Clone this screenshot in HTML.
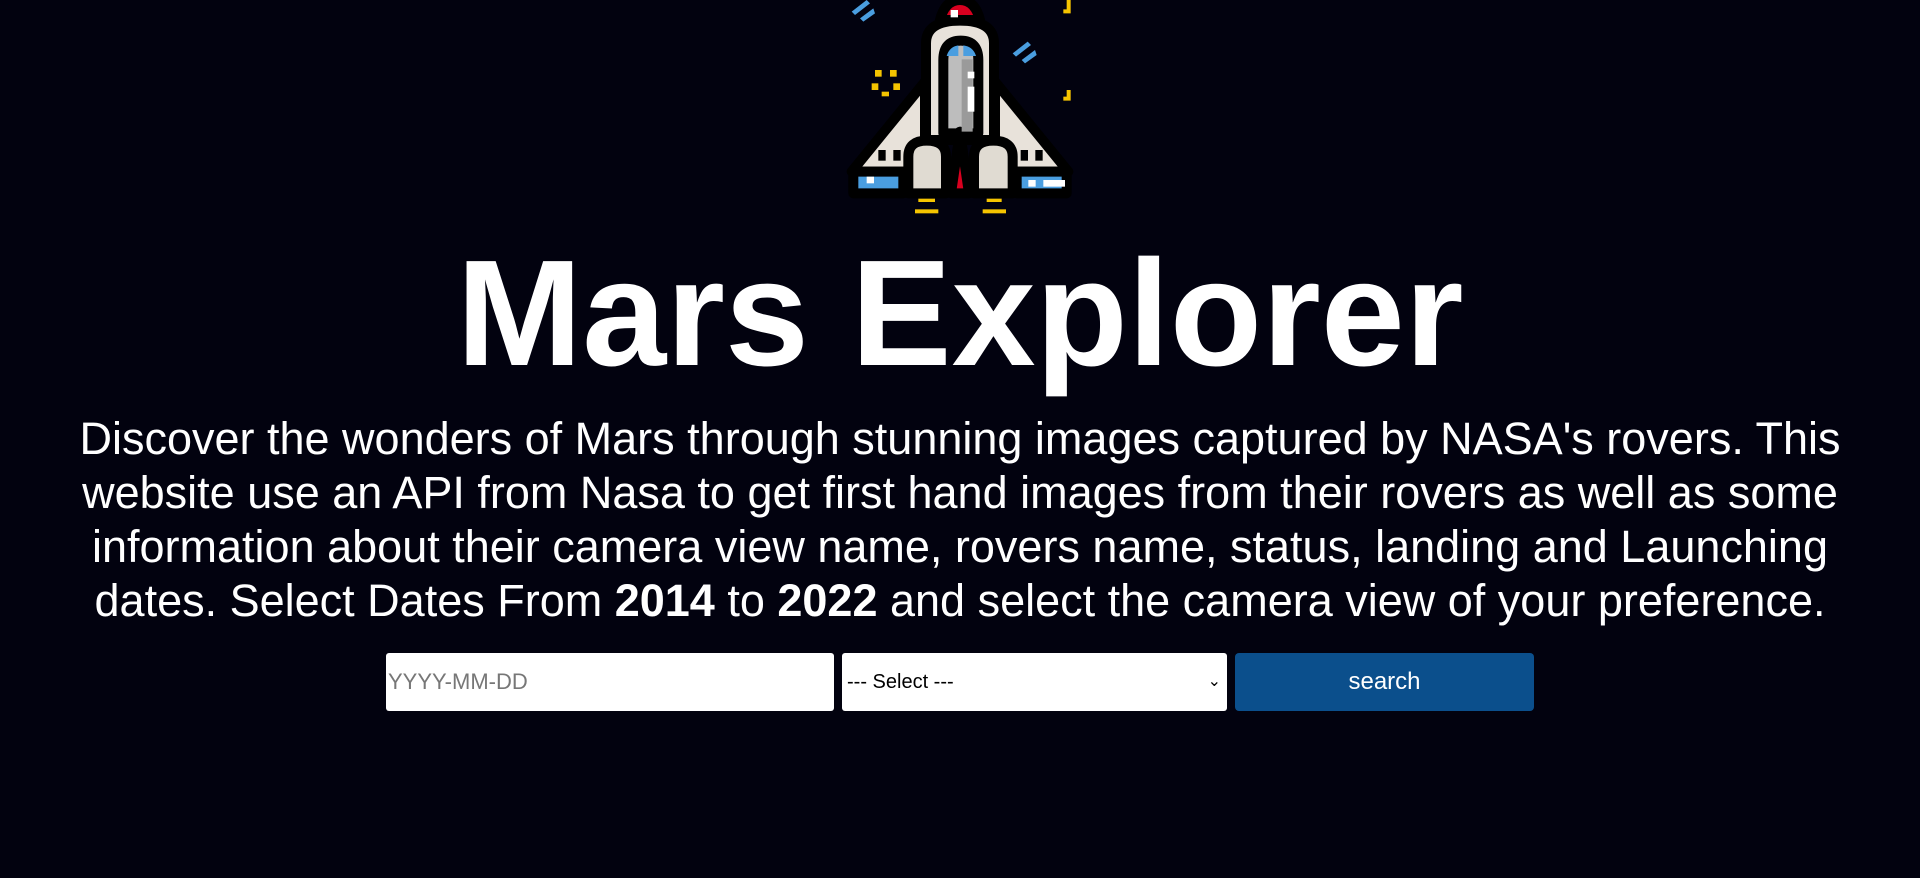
<!DOCTYPE html>
<html><head><meta charset="utf-8"><style>
html,body{margin:0;padding:0;background:#02020f;width:1920px;height:878px;overflow:hidden;font-family:"Liberation Sans",Arial,sans-serif;color:#fff}
svg.r{position:absolute;left:830px;top:0}
h1{position:absolute;left:0;width:1920px;top:233px;margin:0;text-align:center;font-size:151px;font-weight:bold;line-height:160px}
p{position:absolute;left:62px;width:1796px;top:412px;margin:0;text-align:center;font-size:45px;line-height:54px}
.in{position:absolute;top:653px;height:58px;box-sizing:border-box;background:#fff;border-radius:3px}
</style></head><body>
<svg class="r" width="260" height="230" viewBox="0 0 780 690">
<g stroke="#000" stroke-width="30" stroke-linejoin="round">
<polygon points="285,245 65,515 285,515" fill="#e8e2da"/>
<polygon points="495,245 715,515 495,515" fill="#e8e2da"/>
<rect x="70" y="515" width="150" height="65" fill="#4a9ee0"/>
<rect x="560" y="515" width="150" height="65" fill="#4a9ee0"/>
<path d="M330,60 Q345,0 390,0 Q435,0 450,60 Z" fill="#d8001f"/>
<path d="M288,420 L288,130 Q288,62 390,62 Q492,62 492,130 L492,420 Z" fill="#e8e2da"/>
<path d="M340,400 L340,180 Q340,122 392,122 Q445,122 445,180 L445,400 Z" fill="#bdbdbd"/>
<path d="M235,580 L235,470 Q235,422 290,422 Q348,422 348,470 L348,580 Z" fill="#e0dbd2"/>
<path d="M432,580 L432,470 Q432,422 490,422 Q548,422 548,470 L548,580 Z" fill="#e0dbd2"/>
<polygon points="390,395 363,580 417,580" fill="#d8001f"/>
</g>
<path d="M395,178 L428,178 L428,395 L395,395 Z" fill="#9a9a9a"/>
<path d="M350,168 Q358,140 385,136 L385,168 Z M400,136 Q430,140 438,168 L400,168 Z" fill="#4a9ee0"/>
<rect x="362" y="30" width="22" height="22" fill="#fff"/>
<rect x="413" y="215" width="20" height="20" fill="#fff"/>
<rect x="413" y="260" width="20" height="75" fill="#fff"/>
<rect x="145" y="450" width="22" height="32" fill="#000"/><rect x="190" y="450" width="22" height="32" fill="#000"/>
<rect x="572" y="450" width="22" height="32" fill="#000"/><rect x="616" y="450" width="22" height="32" fill="#000"/>
<rect x="110" y="530" width="22" height="20" fill="#fff"/><rect x="595" y="540" width="22" height="20" fill="#fff"/><rect x="640" y="540" width="65" height="20" fill="#fff"/>
<g fill="#f5c400">
<rect x="265" y="596" width="50" height="10"/><rect x="255" y="628" width="70" height="12"/>
<rect x="470" y="596" width="45" height="10"/><rect x="458" y="628" width="70" height="12"/>
<path d="M710,0 h12 v40 h-22 v-12 h10 Z M710,270 h12 v32 h-22 v-12 h10 Z"/>
<rect x="135" y="210" width="20" height="20"/><rect x="180" y="210" width="20" height="20"/><rect x="125" y="250" width="20" height="20"/><rect x="190" y="250" width="20" height="20"/><rect x="155" y="275" width="22" height="14"/>
</g>
<g fill="#4a9ee0">
<path d="M65,35 l45,-35 l10,10 l-45,35 Z M90,55 l40,-30 l5,15 l-35,25 Z"/>
<path d="M548,160 l45,-35 l10,10 l-45,35 Z M575,180 l40,-30 l5,15 l-35,25 Z"/>
</g>
</svg>
<h1>Mars Explorer</h1>
<p>Discover the wonders of Mars through stunning images captured by NASA's rovers. This website use an API from Nasa to get first hand images from their rovers as well as some information about their camera view name, rovers name, status, landing and Launching dates. Select Dates From <b>2014</b> to <b>2022</b> and select the camera view of your preference.</p>
<div class="in" style="left:386px;width:448px;color:#777;font-size:22px;line-height:58px;padding-left:2px">YYYY-MM-DD</div>
<div class="in" style="left:842px;width:385px;color:#000;font-size:20px;line-height:58px;padding-left:5px">--- Select ---<span style="position:absolute;right:6px;top:0;font-size:16px">&#8964;</span></div>
<div class="in" style="left:1235px;width:299px;background:#0b4f8c;color:#fff;font-size:24px;line-height:58px;text-align:center;border-radius:4px">search</div>
</body></html>
